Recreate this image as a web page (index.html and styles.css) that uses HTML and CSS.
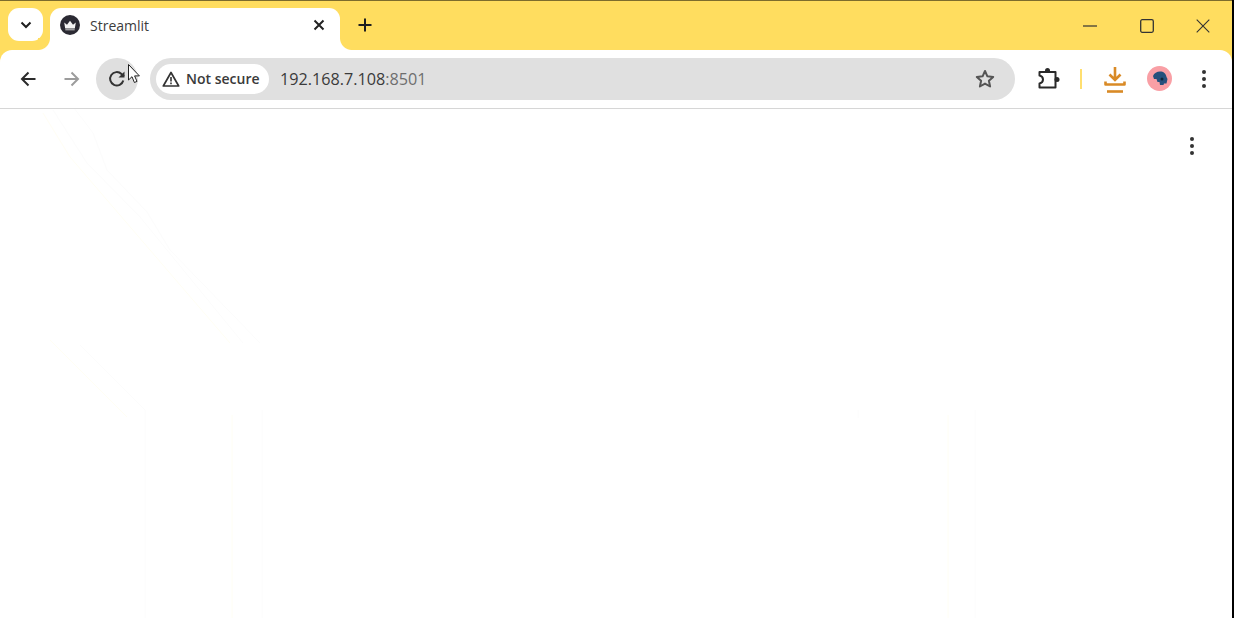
FILE: index.html
```html
<!DOCTYPE html>
<html lang="en">
<head>
<meta charset="utf-8">
<title>Streamlit</title>
<link rel="stylesheet" href="styles.css">
</head>
<body>
<div class="window">
  <header class="titlebar">
    <button class="tab-search">
      <svg width="12" height="8" viewBox="0 0 12 8"><path d="M1.500 1.500 6 6l4.500-4.500" fill="none" stroke="#1f1f1f" stroke-width="2"/></svg>
    </button>
    <div class="tab">
      <svg class="favicon" width="20" height="20" viewBox="0 0 20 20"><circle cx="10" cy="10" r="10" fill="#2b2a33"/><path d="M4.200 7.500 7 9.700 10 5.800l3 3.900 2.800-2.200-1 6H5.200z" fill="#f4f4f4"/><path d="M5.300 14.300h9.400v1H5.300z" fill="#cfcfcf"/></svg>
      <span class="tab-title">Streamlit</span>
      <svg class="tab-close" width="12" height="12" viewBox="0 0 12 12"><path d="M1.500 1.500l9 9m0-9l-9 9" stroke="#222" stroke-width="2"/></svg>
    </div>
    <svg class="new-tab" width="14" height="14" viewBox="0 0 14 14"><path d="M7 .5v13M.5 7h13" stroke="#1f1f1f" stroke-width="2"/></svg>
    <div class="window-controls">
      <svg width="14" height="14" viewBox="0 0 14 14"><path d="M0 7h14" stroke="#333" stroke-width="1.200"/></svg>
      <svg width="14" height="14" viewBox="0 0 14 14"><rect x=".7" y=".7" width="12.600" height="12.600" rx="1.500" fill="none" stroke="#333" stroke-width="1.300"/></svg>
      <svg width="14" height="14" viewBox="0 0 14 14"><path d="M.7.700l12.600 12.600m0-12.600L.7 13.300" stroke="#333" stroke-width="1.100"/></svg>
    </div>
  </header>
  <nav class="toolbar">
    <svg class="nav-icon" width="16" height="16" viewBox="0 0 16 16"><path d="M15.500 8H2M8.500 1.500 2 8l6.500 6.500" fill="none" stroke="#2b2b2b" stroke-width="2"/></svg>
    <svg class="nav-icon forward" width="16" height="16" viewBox="0 0 16 16"><path d="M.5 8H14M7.500 1.500 14 8l-6.500 6.500" fill="none" stroke="#9c9c9c" stroke-width="2"/></svg>
    <div class="reload">
      <svg width="18" height="18" viewBox="0 0 18 18"><path d="M15.300 10.500A6.700 6.700 0 1 1 13.500 4L16 6.300" fill="none" stroke="#333" stroke-width="2"/><path d="M16.500 1.500v6h-6z" fill="#333"/></svg>
      <svg class="cursor" width="12" height="20" viewBox="0 0 12 20"><path d="M.5.500v15.500l3.500-3.300 2.400 5.800 2.600-1.100-2.400-5.500h4.800z" fill="#fff" stroke="#222" stroke-width="1"/></svg>
    </div>
    <div class="omnibox">
      <div class="security-chip">
        <svg width="18" height="16" viewBox="0 0 18 16"><path d="M9 1.500 16.700 15H1.300z" fill="none" stroke="#333" stroke-width="1.700" stroke-linejoin="round"/><path d="M9 6v4.500M9 11.500v1.700" stroke="#333" stroke-width="1.600"/></svg>
        <span class="security-label">Not secure</span>
      </div>
      <span class="url">192.168.7.108<span class="port">:8501</span></span>
      <svg class="star" width="20" height="19" viewBox="0 0 20 19"><path d="M10 2l2.400 5.300 5.800.6-4.300 3.900 1.200 5.700L10 14.600l-5.100 2.900 1.200-5.700L1.800 7.900l5.800-.6z" fill="none" stroke="#555" stroke-width="2" stroke-linejoin="round"/></svg>
    </div>
    <svg class="extensions" width="23" height="23" viewBox="0 0 23 23"><path d="M2.500 5H18.500V20.500H2.500V16.500C5 16 6 14.500 6 12.500C6 10.500 5 9 2.500 8.500Z" fill="none" stroke="#2a2a2a" stroke-width="2" stroke-linejoin="round"/><circle cx="10.500" cy="3.500" r="2.500" fill="#2a2a2a"/><circle cx="20" cy="12.500" r="2.500" fill="#2a2a2a"/></svg>
    <span class="divider"></span>
    <svg class="download" width="22" height="26" viewBox="0 0 22 26"><path d="M11 0v13M5.500 7.500 11 13l5.500-5.500" fill="none" stroke="#d98a26" stroke-width="2.600"/><path d="M1.500 14.500v3h19v-3" fill="none" stroke="#d98a26" stroke-width="2.600" stroke-linejoin="round"/><path d="M3 24.500h16" stroke="#d98a26" stroke-width="2.600"/></svg>
    <div class="avatar">
      <svg width="16" height="15" viewBox="0 0 16 15"><path d="M1 5c1-3 4-4.500 7-4.500 3.500 0 6 2 6.500 5.500l1 2-1 4.500H12l-.5 1.500H8l-.5-3H5.500L4.500 8H2z" fill="#24507c"/><circle cx="10" cy="8" r="1.500" fill="#0f2438"/></svg>
    </div>
    <div class="menu-dots toolbar-menu"><i></i><i></i><i></i></div>
  </nav>
  <main class="content">
    <svg class="artifacts" width="1232" height="509" viewBox="0 109 1232 509">
      <g fill="none" stroke="#fcfcfc">
        <path d="M68 100 93 133 107 170 147 212 170 250 260 343"/>
        <path d="M53 110 87 163 140 217 243 343"/>
        <path d="M80 345 145 410V618M262 410V618M975 410V618M858 410V418"/>
      </g>
      <g fill="none" stroke="#fffef4">
        <path d="M43 113 70 157 230 343"/>
        <path d="M50 340 127 417"/>
        <path d="M232 415V618M948 415V618"/>
      </g>
    </svg>
    <div class="menu-dots app-menu"><i></i><i></i><i></i></div>
  </main>
</div>
</body>
</html>
```
FILE: styles.css
```css
* { box-sizing: border-box; }
html, body { margin: 0; height: 100%; background: #fff; overflow: hidden; }
body { font-family: "Open Sans", "Noto Sans", sans-serif; color: #2e2e2e; }
.window {
  width: 1234px; height: 618px; display: flex; flex-direction: column;
  background: #ffdd5f; border-right: 2px solid #000;
}
.titlebar {
  height: 50px; flex: none; display: flex; align-items: flex-start;
  border-top: 1px solid #7d6c2c;
}
.tab-search {
  width: 35px; height: 33px; margin: 7px 0 0 8px; padding: 0; border: 0;
  border-radius: 11px; background: #fff; display: flex; align-items: center; justify-content: center;
}
.tab {
  width: 290px; height: 42px; margin: 7px 0 0 7px; border-radius: 11px 11px 0 0; background: #fff;
  display: flex; align-items: center; padding: 0 15px 8px 10px; position: relative;
}
.tab::before, .tab::after {
  content: ""; position: absolute; bottom: 0; width: 12px; height: 12px;
}
.tab::before { left: -12px; background: radial-gradient(circle at 0 0, #ffdd5f 11.500px, #fff 12.500px); }
.tab::after { right: -12px; background: radial-gradient(circle at 100% 0, #ffdd5f 11.500px, #fff 12.500px); }
.favicon { flex: none; }
.tab-title { margin-left: 10px; font-size: 14px; color: #3c3c3c; flex: 1; }
.tab-close { flex: none; }
.new-tab { margin: 17px 0 0 18px; flex: none; }
.window-controls {
  margin: 18px 22px 0 auto; display: flex; gap: 42.500px;
}
.toolbar {
  height: 59px; flex: none; display: flex; align-items: center; background: #fff;
  border-bottom: 1px solid #d6d6d6; border-radius: 12px 12px 0 0; padding: 0 0 1px 20px;
}
.nav-icon { flex: none; }
.forward { margin-left: 28px; }
.reload {
  width: 42px; height: 42px; margin-left: 16px; border-radius: 50%; background: #dfdfdf; flex: none;
  display: flex; align-items: center; justify-content: center; position: relative;
}
.cursor { position: absolute; left: 32px; top: 6px; }
.omnibox {
  width: 865px; height: 42px; margin-left: 12px; border-radius: 21px; background: #e0e0e0; flex: none;
  display: flex; align-items: center; padding: 0 20px 0 6px;
}
.security-chip {
  height: 30px; width: 113px; border-radius: 15px; background: #fff; display: flex; align-items: center;
  padding-left: 6px; gap: 6px; flex: none;
}
.security-label { font-size: 14px; font-weight: 600; color: #3a3a3a; }
.url { margin-left: 11px; font-size: 16.200px; color: #3a3a3a; flex: 1; }
.port { color: #6e6e6e; }
.star { flex: none; }
.extensions { margin-left: 22px; flex: none; }
.divider { width: 2px; height: 20px; margin-left: 20px; background: #ffdf70; flex: none; }
.download { margin-left: 22px; margin-top: 3px; flex: none; }
.avatar {
  width: 25px; height: 25px; margin-left: 21px; border-radius: 50%; background: #f99fa5; flex: none;
  display: flex; align-items: center; justify-content: center;
}
.menu-dots { display: flex; flex-direction: column; gap: 3px; align-items: center; }
.menu-dots i { width: 4px; height: 4px; border-radius: 50%; background: #333; display: block; }
.toolbar-menu { margin-left: 30px; }
.content {
  flex: 1; display: flex; justify-content: flex-end; align-items: flex-start;
  padding: 28px 38px 0 0; background: #fff; position: relative;
}
.artifacts { position: absolute; left: 0; top: 0; }
.app-menu { position: relative; }
```
